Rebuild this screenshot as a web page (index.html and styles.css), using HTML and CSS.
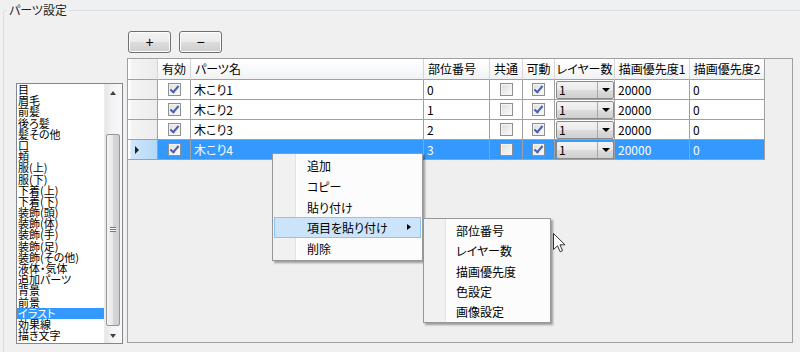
FILE: index.html
```html
<!DOCTYPE html>
<html lang="ja">
<head>
    <meta charset="UTF-8">
    <title>パーツ設定</title>
    <link rel="stylesheet" href="styles.css">
</head>
<body>
    <fieldset class="parts">
        <legend>パーツ設定</legend>
        <div class="toolbar">
            <button class="btn">+</button>
            <button class="btn">−</button>
        </div>
        <div class="main">
            <div class="listbox">
                <ul class="items">
                    <li>目</li>
                    <li>眉毛</li>
                    <li>前髪</li>
                    <li>後ろ髪</li>
                    <li>髪その他</li>
                    <li>口</li>
                    <li>頬</li>
                    <li>服(上)</li>
                    <li>服(下)</li>
                    <li>下着(上)</li>
                    <li>下着(下)</li>
                    <li>装飾(頭)</li>
                    <li>装飾(体)</li>
                    <li>装飾(手)</li>
                    <li>装飾(足)</li>
                    <li>装飾(その他)</li>
                    <li>液体・気体</li>
                    <li>追加パーツ</li>
                    <li>背景</li>
                    <li>前景</li>
                    <li class="sel">イラスト</li>
                    <li>効果線</li>
                    <li>描き文字</li>
                </ul>
                <div class="vscroll">
                    <div class="arrow up"></div>
                    <div class="track"><div class="thumb"><span class="grip"></span></div></div>
                    <div class="arrow down"></div>
                </div>
            </div>
            <div class="grid">
                <div class="row head">
                    <div class="cell rh"></div>
                    <div class="cell c">有効</div>
                    <div class="cell">パーツ名</div>
                    <div class="cell">部位番号</div>
                    <div class="cell c">共通</div>
                    <div class="cell c">可動</div>
                    <div class="cell c">レイヤー数</div>
                    <div class="cell c">描画優先度1</div>
                    <div class="cell c">描画優先度2</div>
                </div>
                <div class="row">
                    <div class="cell rh"></div>
                    <div class="cell c"><span class="cb on"></span></div>
                    <div class="cell">木こり1</div>
                    <div class="cell">0</div>
                    <div class="cell c"><span class="cb"></span></div>
                    <div class="cell c"><span class="cb on"></span></div>
                    <div class="cell combo-cell"><span class="combo">1<i></i></span></div>
                    <div class="cell">20000</div>
                    <div class="cell">0</div>
                </div>
                <div class="row">
                    <div class="cell rh"></div>
                    <div class="cell c"><span class="cb on"></span></div>
                    <div class="cell">木こり2</div>
                    <div class="cell">1</div>
                    <div class="cell c"><span class="cb"></span></div>
                    <div class="cell c"><span class="cb on"></span></div>
                    <div class="cell combo-cell"><span class="combo">1<i></i></span></div>
                    <div class="cell">20000</div>
                    <div class="cell">0</div>
                </div>
                <div class="row">
                    <div class="cell rh"></div>
                    <div class="cell c"><span class="cb on"></span></div>
                    <div class="cell">木こり3</div>
                    <div class="cell">2</div>
                    <div class="cell c"><span class="cb"></span></div>
                    <div class="cell c"><span class="cb on"></span></div>
                    <div class="cell combo-cell"><span class="combo">1<i></i></span></div>
                    <div class="cell">20000</div>
                    <div class="cell">0</div>
                </div>
                <div class="row current">
                    <div class="cell rh"><span class="mark"></span></div>
                    <div class="cell c"><span class="cb on"></span></div>
                    <div class="cell">木こり4</div>
                    <div class="cell">3</div>
                    <div class="cell c"><span class="cb"></span></div>
                    <div class="cell c"><span class="cb on"></span></div>
                    <div class="cell combo-cell"><span class="combo">1<i></i></span></div>
                    <div class="cell">20000</div>
                    <div class="cell">0</div>
                </div>
            </div>
        </div>
    </fieldset>

    <div class="menu ctx">
        <div class="mi">追加</div>
        <div class="mi">コピー</div>
        <div class="mi">貼り付け</div>
        <div class="mi hot">項目を貼り付け<span class="sub-arrow"></span></div>
        <div class="mi">削除</div>
    </div>

    <div class="menu sub">
        <div class="mi">部位番号</div>
        <div class="mi">レイヤー数</div>
        <div class="mi">描画優先度</div>
        <div class="mi">色設定</div>
        <div class="mi">画像設定</div>
    </div>

    <svg class="cursor" width="13" height="20" viewBox="0 0 13 20">
        <path d="M0.5 0.5 L0.5 16.5 L4.5 12.8 L7.2 18.8 L9.6 17.7 L7 11.8 L12 11.8 Z" fill="#fff" stroke="#333" stroke-width="1"/>
    </svg>
</body>
</html>
```

FILE: styles.css
```css
html, body {
    margin: 0;
    height: 100%;
    overflow: hidden;
}
body {
    background: #f0f0f0;
    font-family: "Noto Sans CJK JP", "Liberation Sans", sans-serif;
    font-size: 12px;
    font-feature-settings: "palt" 1;
    color: #000;
    position: relative;
}

/* group box */
.parts {
    margin: 3px 0 0 3px;
    padding: 0;
    width: 820px;
    height: 349px;
    border: 1px solid #d5dfe5;
    border-bottom: none;
    border-radius: 3px 3px 0 0;
    box-sizing: border-box;
}
.parts legend {
    margin-left: 3px;
    padding: 0 2px;
    line-height: 14px;
    color: #1e1e1e;
}

.toolbar {
    display: flex;
    gap: 8px;
    padding-left: 124px;
    margin-top: 14px;
}
.btn {
    width: 43px;
    height: 22px;
    padding: 0;
    border: 1px solid #707070;
    border-radius: 3px;
    background: linear-gradient(#f2f2f2, #ebebeb 50%, #dddddd 50%, #cfcfcf);
    box-shadow: inset 0 0 0 1px #fcfcfc;
    font-family: "Liberation Sans", sans-serif;
    font-size: 14px;
    line-height: 18px;
    color: #000;
}

.main {
    display: flex;
    align-items: flex-start;
    gap: 4px;
    margin-top: 5px;
}

/* list box */
.listbox {
    margin: 25px 0 0 12px;
    width: 107px;
    height: 261px;
    box-sizing: border-box;
    border: 1px solid #828790;
    background: #fff;
    display: flex;
}
.items {
    list-style: none;
    margin: 0;
    padding: 0;
    flex: 1;
    overflow: hidden;
    font-size: 11px;
}
.items li {
    height: 11.2px;
    line-height: 11.2px;
    padding-left: 1px;
    white-space: nowrap;
}
.items li.sel {
    background: #3399ff;
    color: #fff;
}
.vscroll {
    width: 17px;
    display: flex;
    flex-direction: column;
    background: linear-gradient(to right, #e6e6e6, #f3f3f3 40%, #f8f8f8);
    border-left: 1px solid #ececec;
}
.vscroll .arrow {
    height: 17px;
    position: relative;
}
.vscroll .arrow::after {
    content: "";
    position: absolute;
    left: 5px;
    top: 7px;
    border-left: 3.5px solid transparent;
    border-right: 3.5px solid transparent;
}
.vscroll .up::after {
    border-bottom: 4px solid #404040;
}
.vscroll .down::after {
    border-top: 4px solid #404040;
}
.vscroll .track {
    flex: 1;
    padding-top: 33px;
    padding-bottom: 1px;
}
.vscroll .thumb {
    margin: 0 2px 0 1px;
    height: 190px;
    border: 1px solid #979797;
    border-radius: 2px;
    background: linear-gradient(to right, #f4f4f4, #e8e8e8 50%, #d6d6d6 51%, #cfcfcf);
    display: flex;
    align-items: center;
    justify-content: center;
}
.vscroll .grip {
    width: 6px;
    height: 5px;
    background: repeating-linear-gradient(#777 0 1px, #f4f4f4 1px 2px);
}

/* data grid */
.grid {
    width: 666px;
    height: 285px;
    box-sizing: border-box;
    border: 1px solid #a0a0a0;
    background: #efefef;
}
.row {
    display: grid;
    grid-template-columns: 30px 33px 233px 66px 33px 32px 60px 75px 75px;
    height: 20px;
}
.row.head {
    height: 21px;
}
.cell {
    box-sizing: border-box;
    border-right: 1px solid #a0a0a0;
    border-bottom: 1px solid #a0a0a0;
    background: #fff;
    padding-left: 3px;
    line-height: 19px;
    white-space: nowrap;
    overflow: hidden;
}
.cell.c {
    padding-left: 0;
    text-align: center;
    display: flex;
    align-items: center;
    justify-content: center;
}
.head .cell {
    background: linear-gradient(#ffffff, #f7f8fa 60%, #f1f2f4);
    border-right-color: #d5d5d5;
    line-height: 20px;
    padding-left: 4px;
}
.head .cell.c {
    padding-left: 0;
}
.head .cell:last-child {
    border-right-color: #a0a0a0;
}
.cell.rh {
    background: linear-gradient(to right, #ffffff 0 2px, #f4f4f4 3px, #ececec);
    position: relative;
}
.current .cell {
    background: #3399ff;
    color: #fff;
}
.current .cell.rh {
    background: linear-gradient(to right, #ffffff 0 2px, #cfe6fb 3px, #b4d8f7);
}
.rh .mark {
    position: absolute;
    left: 7px;
    top: 6px;
    border-top: 4px solid transparent;
    border-bottom: 4px solid transparent;
    border-left: 4px solid #222;
}

/* check box */
.cb {
    width: 13px;
    height: 13px;
    box-sizing: border-box;
    border: 1px solid #8e8f8f;
    background: linear-gradient(135deg, #dedede, #fafafa);
    box-shadow: inset 0 0 0 1px #f4f4f4;
    position: relative;
}
.cb.on::after {
    content: "";
    position: absolute;
    left: 3px;
    top: 0px;
    width: 3px;
    height: 7px;
    border-right: 2px solid #4a5fb0;
    border-bottom: 2px solid #4a5fb0;
    transform: rotate(40deg);
}

/* combo */
.cell.combo-cell {
    padding: 1px 0 0 1px;
}
.combo {
    display: flex;
    align-items: center;
    height: 18px;
    width: 58px;
    box-sizing: border-box;
    border: 1px solid #8a8a8a;
    border-radius: 2px;
    background: linear-gradient(#f2f2f2, #ebebeb 50%, #dddddd 50%, #cfcfcf);
    color: #000;
    padding-left: 2px;
    line-height: 16px;
    position: relative;
}
.combo i {
    position: absolute;
    right: 0;
    top: 0;
    width: 15px;
    height: 16px;
    border-left: 1px solid #a8a8a8;
}
.combo i::after {
    content: "";
    position: absolute;
    left: 4px;
    top: 6px;
    border-left: 4px solid transparent;
    border-right: 4px solid transparent;
    border-top: 4px solid #000;
}

/* context menus */
.menu {
    position: absolute;
    box-sizing: border-box;
    border: 1px solid #979797;
    padding: 1px 0;
    box-shadow: 2px 2px 2px rgba(0, 0, 0, 0.35);
    z-index: 5;
}
.ctx {
    left: 272px;
    top: 153px;
    width: 151px;
    background: linear-gradient(to right, #f1f1f1 0 22px, #e2e3e3 22px 23px, #ffffff 23px 24px, #fcfcfc 24px);
}
.sub {
    left: 423px;
    top: 218px;
    width: 128px;
    background: linear-gradient(to right, #f1f1f1 0 21px, #e2e3e3 21px 22px, #ffffff 22px 23px, #fcfcfc 23px);
}
.mi {
    height: 20.75px;
    line-height: 20px;
    margin: 0 1px;
    padding-left: 32px;
    box-sizing: border-box;
    border: 1px solid transparent;
    position: relative;
}
.sub .mi {
    height: 20.25px;
    padding-left: 30px;
}
.mi.hot {
    background: #cce4f9;
    border-color: #8fc3f1;
}
.sub-arrow {
    position: absolute;
    right: 9px;
    top: 6px;
    border-top: 3.5px solid transparent;
    border-bottom: 3.5px solid transparent;
    border-left: 4px solid #000;
}

.cursor {
    position: absolute;
    left: 553px;
    top: 233px;
    z-index: 10;
}
```
